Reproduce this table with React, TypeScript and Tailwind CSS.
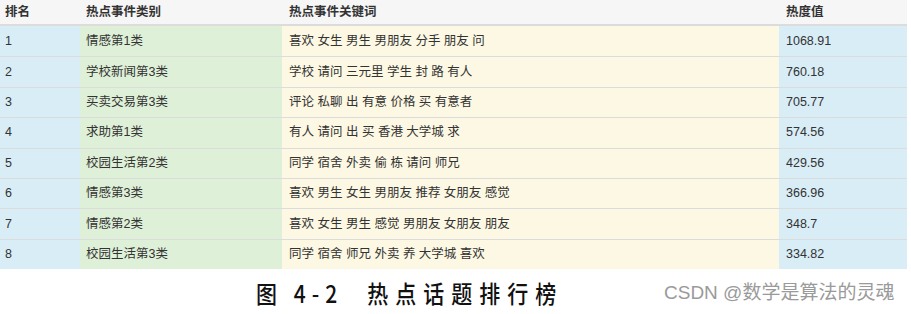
import React from "react";

const rows = [
  ["1", "情感第1类", "喜欢 女生 男生 男朋友 分手 朋友 问", "1068.91"],
  ["2", "学校新闻第3类", "学校 请问 三元里 学生 封 路 有人", "760.18"],
  ["3", "买卖交易第3类", "评论 私聊 出 有意 价格 买 有意者", "705.77"],
  ["4", "求助第1类", "有人 请问 出 买 香港 大学城 求", "574.56"],
  ["5", "校园生活第2类", "同学 宿舍 外卖 偷 栋 请问 师兄", "429.56"],
  ["6", "情感第3类", "喜欢 男生 女生 男朋友 推荐 女朋友 感觉", "366.96"],
  ["7", "情感第2类", "喜欢 女生 男生 感觉 男朋友 女朋友 朋友", "348.7"],
  ["8", "校园生活第3类", "同学 宿舍 师兄 外卖 养 大学城 喜欢", "334.82"],
];

export default function App() {
  return (
    <div
      className="w-[911px] h-[314px] bg-white text-[#333] overflow-hidden"
      style={{ fontFamily: '"Liberation Sans", "Noto Sans CJK SC", sans-serif' }}
    >
      <div className="w-[907px] text-[12.5px]">
        <div className="flex h-[26px] bg-[#f6f6f6] border-b-2 border-[#dcdcdc] font-bold items-center">
          <div className="w-[80px] pl-[5px]">排名</div>
          <div className="w-[202px] pl-[6px]">热点事件类别</div>
          <div className="w-[497px] pl-[7px]">热点事件关键词</div>
          <div className="flex-1 pl-[7px]">热度值</div>
        </div>
        {rows.map((r, i) => (
          <div
            key={i}
            className={`flex h-[30.4px] ${i > 0 ? "border-t border-[#dcdcdc]" : ""}`}
          >
            <div className="w-[80px] pl-[5px] bg-[#d9edf7] flex items-center">{r[0]}</div>
            <div className="w-[202px] pl-[6px] bg-[#dff0d8] flex items-center">{r[1]}</div>
            <div className="w-[497px] pl-[7px] bg-[#fcf8e3] flex items-center">{r[2]}</div>
            <div className="flex-1 pl-[7px] bg-[#d9edf7] flex items-center">{r[3]}</div>
          </div>
        ))}
      </div>
      <div className="relative h-[45px]">
        <div
          className="absolute left-[256px] top-[12px] flex items-center text-[21px] leading-[24px] text-[#111] whitespace-pre font-medium"
          style={{ fontFamily: '"Noto Sans CJK SC", sans-serif', transform: "scaleY(1.15)" }}
        >
          <span className="tracking-[6px]">图 4-2</span>
          <span className="w-[24px]" />
          <span className="tracking-[7px]">热点话题排行榜</span>
        </div>
        <div
          className="absolute left-[664px] top-[13px] text-[19px] leading-[22px] text-[#9a9a9a] whitespace-pre"
          style={{ fontFamily: '"Liberation Sans", "Noto Sans CJK SC", sans-serif' }}
        >
          CSDN @数学是算法的灵魂
        </div>
      </div>
    </div>
  );
}
